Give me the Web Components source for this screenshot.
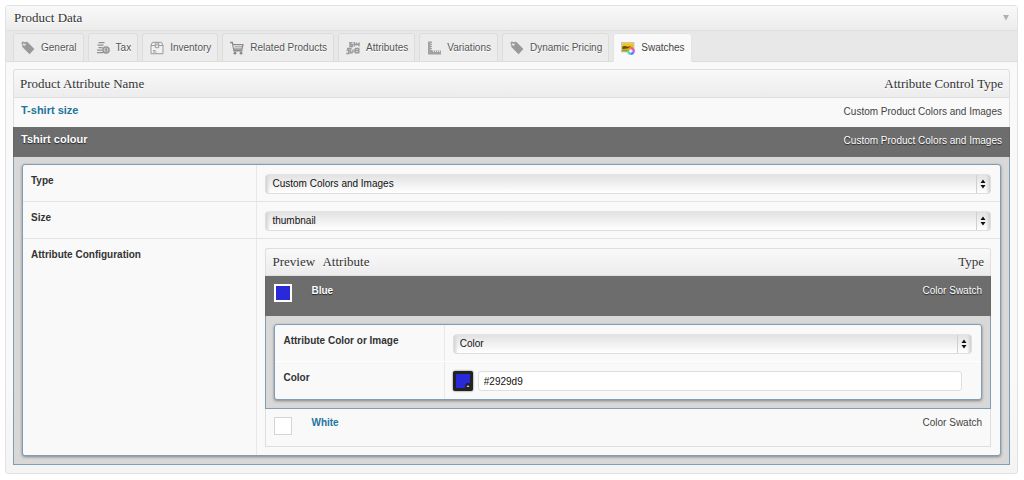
<!DOCTYPE html>
<html lang="en">
<head>
<meta charset="utf-8">
<title>Product Data</title>
<style>
  body {
    margin: 0;
    padding: 5px 6px 5px 5px;
    background: #fff;
    color: #333;
    font: 10px/12px "Liberation Sans", Arial, sans-serif;
    --serif: "Liberation Serif", Georgia, serif;
  }
</style>
</head>
<body>
<product-panel heading="Product Data">
  <panel-tab slot="tabs" icon="tag">General</panel-tab>
  <panel-tab slot="tabs" icon="coins">Tax</panel-tab>
  <panel-tab slot="tabs" icon="box">Inventory</panel-tab>
  <panel-tab slot="tabs" icon="cart">Related Products</panel-tab>
  <panel-tab slot="tabs" icon="blocks">Attributes</panel-tab>
  <panel-tab slot="tabs" icon="ruler">Variations</panel-tab>
  <panel-tab slot="tabs" icon="tag">Dynamic Pricing</panel-tab>
  <panel-tab slot="tabs" icon="swatch" active>Swatches</panel-tab>

  <attribute-table>
    <form-card slot="detail">
      <form-row label="Type"><select-box value="Custom Colors and Images" name="Type"></select-box></form-row>
      <form-row label="Size"><select-box value="thumbnail" name="Size"></select-box></form-row>
      <form-row label="Attribute Configuration">
        <swatch-table>
          <form-card slot="detail">
            <form-row label="Attribute Color or Image" soft><select-box value="Color" name="Attribute Color or Image"></select-box></form-row>
            <form-row label="Color"><color-field value="#2929d9" name="Color"></color-field></form-row>
          </form-card>
        </swatch-table>
      </form-row>
    </form-card>
  </attribute-table>
</product-panel>

<script>
const ICONS = {
  tag: `<path d="M1 1.5 6.2.8 13.4 8 8.6 13.2 1.3 6Z" fill="#999"/><circle cx="3.4" cy="3.4" r="1.3" fill="#e9e9e9"/><path d="M.3 2.6C.8.8 3 .2 3.8 3.2" fill="none" stroke="#888" stroke-width=".8"/>`,
  coins: `<g stroke="#8f8f8f" stroke-width="1.3" fill="none"><path d="M2.5 1.7h6M1.5 4.2h6M2.5 6.7h4M1 9.2h5M1 11.7h6"/><circle cx="10" cy="9" r="3.1" fill="#c6c6c6"/></g><path d="M11 7.8H9.6v1.1h1v1.2H9" stroke="#888" stroke-width=".8" fill="none"/>`,
  box: `<g stroke="#999" fill="none"><path d="M1 4.5v8.2h12V4.5L11.6 1.3H2.4L1 4.5Z" fill="#f1f1f1"/><path d="M1 4.5h4M9 4.5h4M5.3 1.3v5.4h3.4V1.3M7 1.3V5"/><path d="M3 9.5h2.5M3 11h3.5" stroke-width=".9"/></g>`,
  cart: `<g stroke="#8b8b8b" fill="none"><path d="M0 1.5h2.4L4 9.8h8.5" stroke-width="1.4"/><path d="M3 3.5h10l-1 4.6H4" stroke-width="1.2" fill="#d7d7d7"/><path d="M5 5.7h7" stroke="#aaa"/></g><circle cx="5" cy="12.2" r="1.4" fill="#888"/><circle cx="11" cy="12.2" r="1.4" fill="#888"/>`,
  blocks: `<g stroke="#999" stroke-width="1.5" fill="none"><path d="M6.5 1.8H4v2h2.2v1.6H3.2M8.2 1v4.6M10.4 1.4v3.2M13 1.4v3.8M8.2 3.4H13M1 7.6h4.6M.2 12.4h2.6V9.2H.6M4.6 8.4v2.8M7 8.4v2.8M3.8 11.7h3M9 7.6h4.4M9 9.6h3M9 11.8h4M12.8 7.6v4.6M9 7.6v4.2"/></g>`,
  ruler: `<path d="M1 .5h4v9h9v4H1Z" fill="#a2a2a2"/><path d="M3.5 2.5H5M3.5 4.5H5M3.5 6.5H5M3.5 8.5H5M6.5 9.5V11M8.5 9.5V11M10.5 9.5V11M12.5 9.5V11" stroke="#ededed" stroke-width=".9"/>`,
  swatch: `<defs><linearGradient id="g" x2="0" y2="1"><stop stop-color="#f7cb18"/><stop offset="1" stop-color="#e4a313"/></linearGradient></defs><rect x=".5" y="1.5" width="12.5" height="9.5" fill="#ddd5aa" stroke="#b5bcc0" stroke-width=".7"/><rect x="1.2" y="2.2" width="11.2" height="8" fill="url(#g)"/><path d="M1.4 5.6 4 5l2.6.8 3-.6v1.7l-3.4.6-4.8.4Z" fill="#5c4c17"/><path d="M1.2 8.9h6v1.4h-6Z" fill="#76a23a"/><g><path d="M9.9 10V6.1A3.9 3.9 0 0 1 13.3 8.1Z" fill="#f5509d"/><path d="M9.9 10 13.3 8.1A3.9 3.9 0 0 1 13.3 11.9Z" fill="#c254ef"/><path d="M9.9 10 13.3 11.9A3.9 3.9 0 0 1 9.9 13.9Z" fill="#477bed"/><path d="M9.9 10V13.9A3.9 3.9 0 0 1 6.5 11.9Z" fill="#30cfe2"/><path d="M9.9 10 6.5 11.9A3.9 3.9 0 0 1 6.5 8.1Z" fill="#60dd51"/><path d="M9.9 10 6.5 8.1A3.9 3.9 0 0 1 9.9 6.1Z" fill="#ff893a"/><circle cx="9.9" cy="10" r="1.8" fill="#fff" opacity=".85"/></g>`
};

class Base extends HTMLElement {
  connectedCallback() {
    if (this.shadowRoot) return;
    this.attachShadow({ mode: "open" }).innerHTML =
      `<style>*{box-sizing:border-box}:host{display:block}${this.css()}</style>${this.html()}`;
  }
  attr(name) { return this.getAttribute(name) || ""; }
}

customElements.define("product-panel", class extends Base {
  css() { return `
    section { border: 1px solid #e2e2e2; border-radius: 3px; background: linear-gradient(#f9f9f9 80%, #f4f4f4); }
    header { display: flex; align-items: center; justify-content: space-between; height: 25px; padding: 0 7px 0 8px;
      border-bottom: 1px solid #dfdfdf; background: linear-gradient(#f9f9f9, #ececec); }
    h2 { margin: 0; font: 13px/16px var(--serif); color: #333; text-shadow: 0 1px #fff; }
    button { border: 0; padding: 0; background: none; display: flex; }
    nav { display: flex; gap: 4px; padding: 2px 7px 0; background: #e8e8e8; box-shadow: inset 0 -1px #dcdcdc; }
    main { padding: 7px 7px 8px; }`; }
  html() { return `
    <section>
      <header><h2>${this.attr("heading")}</h2>
        <button aria-label="Toggle panel"><svg width="7" height="6"><path d="M0 0h6L3 5.5Z" fill="#b0b0b0"/></svg></button></header>
      <nav><slot name="tabs"></slot></nav>
      <main><slot></slot></main>
    </section>`; }
});

customElements.define("panel-tab", class extends Base {
  css() { return `
    a { display: flex; align-items: center; gap: 6px; height: 29px; padding: 0 6px 0 7px; border: 1px solid #dcdcdc;
      border-radius: 3px 3px 0 0; background: #ececec; color: #555; text-decoration: none; white-space: nowrap; text-shadow: 0 1px #fff; }
    :host([active]) a { background: #f9f9f9; border-color: #e4e4e4; border-bottom-color: #f9f9f9; color: #444; }
    svg { flex: none; }`; }
  html() { return `<a href="#"><svg width="14" height="14" viewBox="0 0 14 14">${ICONS[this.attr("icon")]}</svg><span><slot></slot></span></a>`; }
});

const TABLE_CSS = `
  table { width: 100%; border-collapse: separate; border-spacing: 0; }
  th { padding: 0 6px; font: 13px/16px var(--serif); text-align: left; color: #333; text-shadow: 0 1px #fff;
    border: solid #dfdfdf; border-width: 1px 0; background: linear-gradient(#f9f9f9, #ececec); }
  th:first-child { border-left-width: 1px; border-top-left-radius: 3px; }
  th:last-child { border-right-width: 1px; border-top-right-radius: 3px; }
  td { vertical-align: top; border: 0 solid #dfdfdf; background: #f9f9f9; color: #444; }
  td:first-child { border-left-width: 1px; }
  td:last-child { border-right-width: 1px; }
  .end { text-align: right; }
  a { color: #21759b; font-weight: bold; text-decoration: none; }
  .open td { background: #6d6d6d; border-color: #666; color: #fff; text-shadow: 0 1px 1px #222; }
  .open a { color: #fff; }
  .detail > td { border: 1px solid #7f9db5; border-top: 0; background: #d8d8d8; }
`;

customElements.define("attribute-table", class extends Base {
  css() { return TABLE_CSS + `
    th, td { height: 29px; }
    .name { font-size: 11px; }
    td { padding: 6px 7px; }
    td.end { padding-top: 8px; }
    .open td { height: 30px; }
    .detail > td { padding: 7px 8px 8px; }`; }
  html() { return `
    <table>
      <thead><tr><th>Product Attribute Name</th><th class="end">Attribute Control Type</th></tr></thead>
      <tbody>
        <tr><td><a class="name" href="#">T-shirt size</a></td><td class="end">Custom Product Colors and Images</td></tr>
        <tr class="open"><td><a class="name" href="#">Tshirt colour</a></td><td class="end">Custom Product Colors and Images</td></tr>
        <tr class="detail"><td colspan="2"><slot name="detail"></slot></td></tr>
      </tbody>
    </table>`; }
});

customElements.define("swatch-table", class extends Base {
  css() { return TABLE_CSS + `
    table { table-layout: fixed; }
    .c1 { width: 46px; } .c2 { width: 11px; } .c4 { width: 90px; }
    th { height: 28px; }
    th + th { padding-left: 0; }
    td { height: 38px; padding: 8px; }
    td + td { padding-left: 0; }
    .open td { height: 40px; }
    .open td + td { padding-top: 9px; }
    .detail > td { padding: 8px; }
    .last td { border-bottom-width: 1px; }
    i { display: block; width: 18px; height: 18px; background: #fff; border: 1px solid #d5d5d5; }
    .open i { background: #2929d9; border: 2px solid #fff; }`; }
  html() { return `
    <table>
      <colgroup><col class="c1"><col class="c2"><col><col class="c4"></colgroup>
      <thead><tr><th colspan="2">Preview</th><th>Attribute</th><th class="end">Type</th></tr></thead>
      <tbody>
        <tr class="open"><td><i></i></td><td colspan="2"><a href="#">Blue</a></td><td class="end">Color Swatch</td></tr>
        <tr class="detail"><td colspan="4"><slot name="detail"></slot></td></tr>
        <tr class="last"><td><i></i></td><td colspan="2"><a href="#">White</a></td><td class="end">Color Swatch</td></tr>
      </tbody>
    </table>`; }
});

customElements.define("form-card", class extends Base {
  css() { return `
    div { border: 1px solid #7f9db5; border-radius: 3px; background: #f9f9f9; box-shadow: 0 1px 3px rgba(0,0,0,.4); overflow: hidden; }
    ::slotted(:not(:last-child)) { border-bottom: 1px solid #e3e3e3; }
    ::slotted([soft]) { border-bottom-color: #fff; }`; }
  html() { return `<div><slot></slot></div>`; }
});

customElements.define("form-row", class extends Base {
  css() { return `
    :host { display: grid; grid-template-columns: 24% minmax(0, 1fr); box-sizing: border-box; }
    b { padding: 10px 8px; border-right: 1px solid #e8e8e8; color: #333; }
    div { padding: 9px 9px 7px 8px; }
    :host(:last-child) div { padding-bottom: 8px; }`; }
  html() { return `<b>${this.attr("label")}</b><div><slot></slot></div>`; }
});

customElements.define("select-box", class extends Base {
  css() { return `
    label { display: grid; align-items: center; }
    select, svg { grid-area: 1 / 1; }
    select { appearance: none; width: 100%; height: 20px; padding: 0 20px 1px 6px; border: 1px solid #dedede; border-top-color: #e4e4e4;
      border-radius: 4px; font: inherit; color: #111;
      background: linear-gradient(90deg, #d4d4d4, transparent 4px, transparent calc(100% - 4px), #d0d0d0), linear-gradient(#e2e2e2, #fff); }
    svg { justify-self: end; pointer-events: none; }`; }
  html() { return `<label><select aria-label="${this.attr("name")}"><option>${this.attr("value")}</option></select>
    <svg width="16" height="18"><path d="M1.5 0v18" stroke="#d0d0d0"/><path d="M5.5 8 8 4.5 10.5 8ZM5.5 10h5L8 13.5Z" fill="#111"/></svg></label>`; }
});

customElements.define("color-field", class extends Base {
  css() { return `
    div { display: flex; gap: 5px; padding-right: 10px; }
    button { flex: none; display: flex; width: 20px; height: 20px; padding: 0; border: 0; border-radius: 2px; background: #222; box-shadow: 0 0 2px #555; }
    input { flex: 1; min-width: 0; height: 20px; padding: 0 5px; border: 1px solid #dfdfdf; border-radius: 3px; background: #fff; font: inherit; color: #111; }`; }
  html() { return `<div>
    <button aria-label="Pick a color"><svg width="20" height="20"><path d="M3 3h14v9h-3l-2 2v3H3Z" fill="#2929d9"/><path d="M13.5 16h3L15 14Z" fill="#ccc"/></svg></button>
    <input aria-label="${this.attr("name")}" value="${this.attr("value")}"></div>`; }
});
</script>
</body>
</html>
